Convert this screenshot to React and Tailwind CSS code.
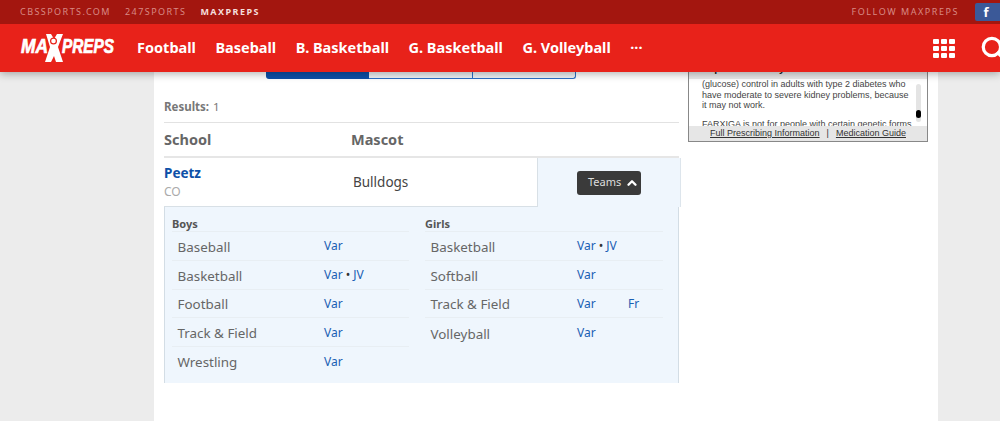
import React from 'react';
import { ChevronUp, Search } from 'lucide-react';

const navItems = ['Football', 'Baseball', 'B. Basketball', 'G. Basketball', 'G. Volleyball'];

const boys = [
  { name: 'Baseball', levels: ['Var'] },
  { name: 'Basketball', levels: ['Var', 'JV'] },
  { name: 'Football', levels: ['Var'] },
  { name: 'Track & Field', levels: ['Var'] },
  { name: 'Wrestling', levels: ['Var'] },
];

const girls = [
  { name: 'Basketball', levels: ['Var', 'JV'] },
  { name: 'Softball', levels: ['Var'] },
  { name: 'Track & Field', levels: ['Var'], fr: true },
  { name: 'Volleyball', levels: ['Var'] },
];

const Logo = () => (
  <svg width="100" height="36" viewBox="0 0 100 36" className="shrink-0">
    <g fill="#fff" stroke="#fff" strokeWidth="0.7" fontFamily="'Liberation Sans', sans-serif" fontWeight="700" fontStyle="italic">
      <text x="1" y="23" fontSize="19.5" textLength="27" lengthAdjust="spacingAndGlyphs">MA</text>
      <text x="42" y="23" fontSize="19.5" textLength="52" lengthAdjust="spacingAndGlyphs">PREPS</text>
    </g>
    <path d="M26 4h5l3 5 3-5h6l-5 13 5 15h-7l-2-6-3 6h-6l5-15z" fill="#fff" />
    <circle cx="33.5" cy="11" r="3.5" fill="#e8221a" />
    <circle cx="33.5" cy="11" r="2.3" fill="#fff" />
  </svg>
);

const SportList = ({ title, rows, className }) => (
  <div className={className}>
    <div className="h-[25px] pt-[9px] text-[11px] leading-[16px] font-bold text-[#555] border-b border-[#e8eef3]">{title}</div>
    {rows.map((row) => (
      <div key={row.name} className="flex h-[28.75px] items-center border-b border-[#e8eef3] pt-[2px] last:border-b-0">
        <div className="w-[152px] pl-[5.5px] text-[13.4px] text-[#666]">{row.name}</div>
        <div className="-mt-[1px] flex text-[12px] text-[#1a5fb4]">
          <div className="w-[51px] whitespace-nowrap">
            {row.levels.map((level, i) => (
              <span key={level}>
                {i > 0 && <span className="mx-[3px] text-[#333]">•</span>}
                {level}
              </span>
            ))}
          </div>
          {row.fr && <div>Fr</div>}
        </div>
      </div>
    ))}
  </div>
);

export default function App() {
  return (
    <div className="relative h-screen overflow-hidden bg-[#ececec] font-['Noto_Sans',sans-serif]">
      <header className="relative z-10 shadow-[0_2px_8px_rgba(0,0,0,0.3)]">
        <div className="flex h-[24px] items-center bg-[#a3160f] pl-[20px] text-[9px] tracking-[1.45px]">
          <span className="text-[#d88a85]">CBSSPORTS.COM</span>
          <span className="ml-[14px] text-[#d88a85]">247SPORTS</span>
          <span className="ml-[14px] font-bold text-[#f5dedd]">MAXPREPS</span>
          <span className="ml-auto tracking-[1.55px] text-[#d88a85]">FOLLOW MAXPREPS</span>
          <div className="ml-[16px] flex h-[18px] w-[25px] justify-center rounded-l-[2px] bg-[#3b5998] pr-[3px] text-[13px] leading-[18px] font-bold tracking-normal text-white">f</div>
        </div>
        <div className="flex h-[48px] items-center overflow-hidden bg-[#e8221a] pl-[20px] text-white">
          <Logo />
          <nav className="ml-[17px] flex gap-[19.5px] text-[14.5px] font-bold">
            {navItems.map((item) => (
              <span key={item} className="whitespace-nowrap">{item}</span>
            ))}
            <span className="whitespace-nowrap">···</span>
          </nav>
          <div className="ml-auto grid grid-cols-3 gap-[2px]">
            {Array.from({ length: 9 }).map((_, i) => (
              <div key={i} className="h-[5px] w-[6px] rounded-[1px] bg-white" />
            ))}
          </div>
          <Search className="ml-[25px] -mr-[6px] shrink-0" size={26} strokeWidth={3} />
        </div>
      </header>

      <main className="mx-[62px] ml-[154px] flex h-[349px] bg-white pl-[10px]">
        <section className="w-[515px]">
          <div className="ml-[102px] flex h-[7px] w-[310px]">
            <div className="w-[103px] rounded-bl-[3px] bg-[#0d50a8]" />
            <div className="w-[104px] border-r border-b border-[#2a70c8] bg-[#eef2f5]" />
            <div className="w-[103px] rounded-br-[3px] border-r border-b border-[#2a70c8] bg-[#eef2f5]" />
          </div>
          <div className="mt-[20px] h-[24px] border-b border-[#e2e2e2] text-[11.5px] leading-[16px] text-[#777]">
            <span className="font-bold">Results:</span> <span className="ml-[1px]">1</span>
          </div>
          <div className="flex h-[35px] items-center border-b-2 border-[#e6e6e6] text-[14.5px] font-bold text-[#666]">
            <div className="w-[187px]">School</div>
            <div>Mascot</div>
          </div>
          <div className="-mr-[2px] flex h-[49px] w-[517px]">
            <div className="flex w-[374px] border-b border-r border-[#d8e0e6]">
              <div className="w-[189px] pt-[5px]">
                <div className="text-[13.5px] leading-[20px] font-bold text-[#0d50a8]">Peetz</div>
                <div className="text-[12px] leading-[18px] text-[#aaa]">CO</div>
              </div>
              <div className="pt-[13px] text-[13.5px] leading-[22px] text-[#444]">Bulldogs</div>
            </div>
            <div className="flex flex-1 items-center justify-center border-r border-[#dde5ec] bg-[#eff6fd]">
              <button className="flex h-[24px] w-[64px] items-center justify-start gap-[4px] rounded-[3px] bg-[#3a3a3a] pl-[11px] text-[11px] text-[#ddd]">
                Teams
                <ChevronUp size={14} strokeWidth={4} className="text-white" />
              </button>
            </div>
          </div>
          <div className="flex h-[176px] border-x border-[#d3dde5] bg-[#eff6fd] pl-[7px]">
            <SportList title="Boys" rows={boys} className="w-[237px]" />
            <SportList title="Girls" rows={girls} className="ml-[16px] w-[238px]" />
          </div>
        </section>

        <aside className="relative -mt-[16px] ml-[9px] flex h-[86px] w-[240px] flex-col overflow-hidden border border-[#888] bg-white font-['Liberation_Sans',sans-serif] text-[#444]">
          <div className="h-[22px] shrink-0 bg-[#e8e8e8] pl-[13px] pt-[5px] text-[10.5px] font-bold leading-[12px] text-[#222]">Important Safety Information</div>
          <div className="flex-1 overflow-hidden whitespace-nowrap px-[13px] text-[9px] leading-[10.5px]">
            <p>(glucose) control in adults with type 2 diabetes who<br />have moderate to severe kidney problems, because<br />it may not work.</p>
            <p className="mt-[8px]">FARXIGA is not for people with certain genetic forms</p>
          </div>
          <div className="absolute top-[27px] right-[6px] h-[38px] w-[5px] rounded-full bg-[#e4e4e4]">
            <div className="mt-[26px] h-[8px] w-[5px] rounded-full bg-black" />
          </div>
          <div className="flex h-[15px] shrink-0 justify-center gap-[7px] bg-[#e6e6e6] text-[9px] leading-[14px] text-[#333]">
            <span className="underline">Full Prescribing Information</span>
            <span>|</span>
            <span className="underline">Medication Guide</span>
          </div>
        </aside>
      </main>
    </div>
  );
}
